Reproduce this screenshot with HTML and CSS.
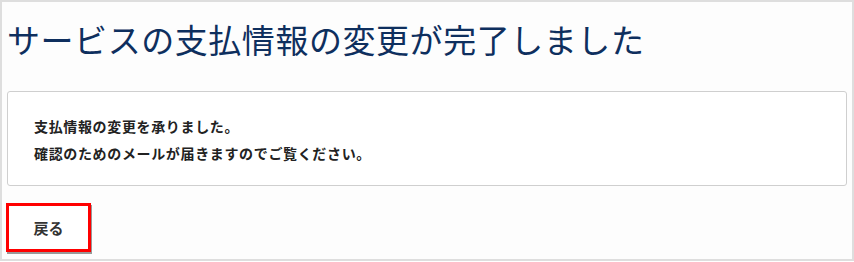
FILE: index.html
```html
<!DOCTYPE html>
<html lang="ja">
<head>
    <meta charset="UTF-8">
    <title>支払情報の変更完了</title>
    <link rel="stylesheet" href="styles.css">
</head>
<body>
    <section class="page">
        <h1 class="title">サービスの支払情報の変更が完了しました</h1>
        <div class="msgBox">
            <p>支払情報の変更を承りました。</p>
            <p>確認のためのメールが届きますのでご覧ください。</p>
        </div>
        <div class="btnRow">
            <button type="button" class="backBtn">戻る</button>
        </div>
    </section>
</body>
</html>
```

FILE: styles.css
```css
html,
body,
h1,
p{
    margin: 0;
    padding: 0;
}
body{
    font-family: "Noto Sans CJK JP", "Noto Sans", sans-serif;
    background-color: #fff;
}
.page{
    box-sizing: border-box;
    width: 854px;
    height: 261px;
    border: 2px solid #dedede;
    padding: 0 5px 0 4px;
    background-color: #fdfdfd;
}
.title{
    font-size: 33px;
    letter-spacing: 0.55px;
    font-weight: normal;
    color: #0e2f5e;
    line-height: 50px;
    padding: 12px 0 0 1px;
    height: 77px;
}
.msgBox{
    border: 1px solid #cfcfcf;
    border-radius: 3px;
    background-color: #fff;
    padding: 21px 26px 18px;
    margin-left: 1px;
}
.msgBox p{
    font-size: 14px;
    letter-spacing: 0.65px;
    font-weight: bold;
    color: #222;
    line-height: 27px;
}
.btnRow{
    padding-top: 17px;
}
.backBtn{
    width: 85px;
    height: 49px;
    border: 3px solid #f00;
    background-color: #fff;
    box-shadow: 1px 2px 0 #999;
    font-family: "Noto Sans CJK JP", sans-serif;
    font-size: 15px;
    font-weight: bold;
    color: #333;
    margin-left: 0;
}
```
